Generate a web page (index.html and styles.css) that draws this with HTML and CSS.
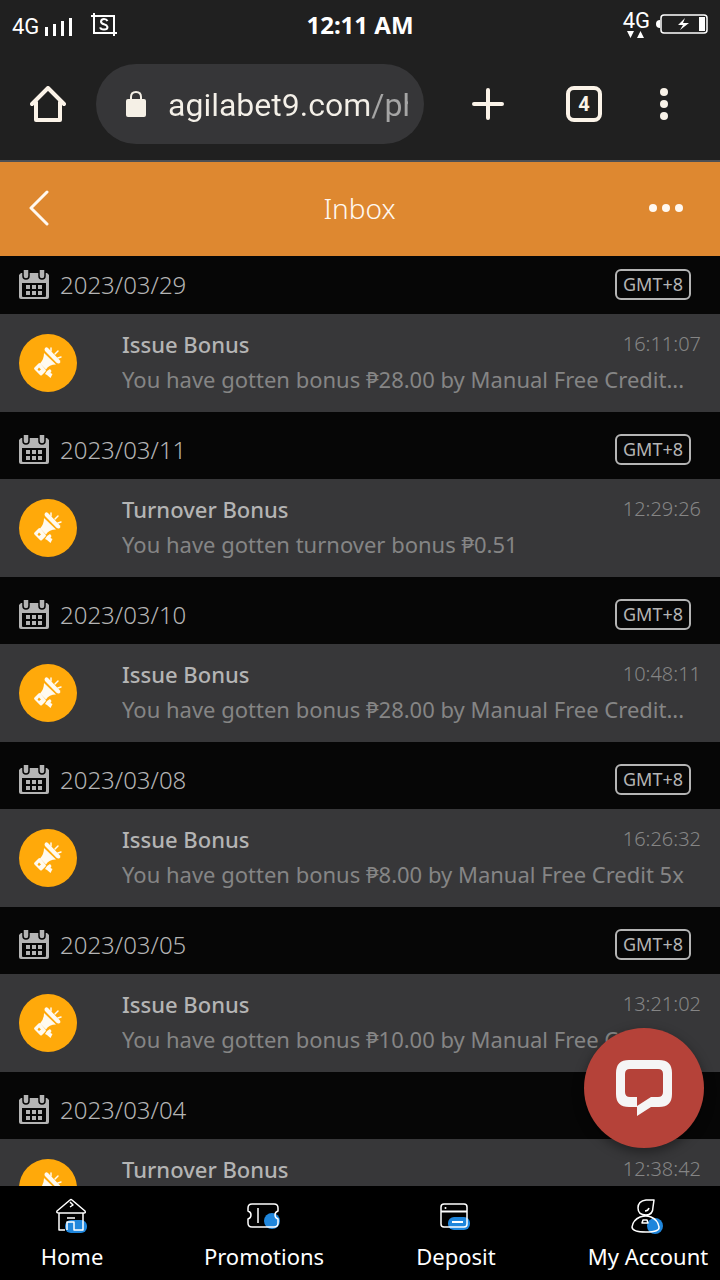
FILE: index.html
```
<!DOCTYPE html>
<html lang="en">
<head>
  <meta charset="UTF-8" />
  <meta name="viewport" content="width=device-width, initial-scale=1.0" />
  <title>Inbox</title>
  <link rel="stylesheet" href="styles.css">
</head>
<body>
  <!-- shared icons -->
  <svg width="0" height="0" class="sprite">
    <symbol id="calendar" viewBox="0 0 30 29">
      <path fill="currentColor" fill-rule="evenodd" d="M2 3h26l2 2v22q0 2-2 2H2q-2 0-2-2V5zM3 13v13q0 1 1 1h22q1 0 1-1V13z"/>
      <path d="M4 -1v7q0 3 3 3t3-3V-1M20 -1v7q0 3 3 3t3-3V-1" fill="currentColor" stroke="#060606" stroke-width="1.500"/>
      <path fill="currentColor" d="M7 15h4v4H7zM13 15h4v4h-4zM19 15h4v4h-4zM7 21h4v4H7zM13 21h4v4h-4zM19 21h4v4h-4z"/>
    </symbol>
    <symbol id="megaphone" viewBox="0 0 58 58">
      <g fill="#fffaf0">
        <path d="M26 14q1.500-1.500 3 0l12 12.500q1 2-.5 2.800t-3-.5L26 17q-1-1.500 0-3z"/>
        <path d="M25 19l12 11.500q-7 0-10 5l-6-6q4-4 4-10.500z"/>
        <path fill-rule="evenodd" d="M19.500 29.500q1-1 2 0l5 6q1 1 0 2l-3.500 3.500q-1 1-2 0l-5.500-5.500q-1-1 0-2zM20 33.500l-1.500 2 1.500 1.500 2-1.500z"/>
        <path d="M28 37l3-2 1.500 2-1 2 2 1-2 4-3.500-3-2-1z"/>
      </g>
      <path d="M32 17v-3M36 20l3-3M39 24l3-1" stroke="#fffaf0" stroke-width="1.500" stroke-linecap="round"/>
    </symbol>
  </svg>

  <header class="status-bar">
    <div class="status-left">
      <span class="network">4G</span>
      <svg width="28" height="18" viewBox="0 0 28 18" fill="#fff"><path d="M0 9h3v9H0zM8 6h3v12H8zM16 3h3v15h-3zM24 0h3v18h-3z"/></svg>
      <svg class="capture" width="26" height="24" viewBox="0 0 26 24" fill="none" stroke="#fff" stroke-width="2"><path d="M3 0v20h23M0 3h23v20"/><path d="M16.500 8q-1-2-3.500-2t-3 2.500q0 2 3 2.800t3.500 2.700q0 2.500-3.500 2.500t-3.800-2.200" stroke-width="2"/></svg>
    </div>
    <time class="clock">12:11 AM</time>
    <div class="status-right">
      <div class="data">
        <span class="network">4G</span>
        <svg width="18" height="7" viewBox="0 0 18 7" fill="#fff"><path d="M0 0h7L3.500 7zM10 7h7L13.500 0z"/></svg>
      </div>
      <svg width="52" height="20" viewBox="0 0 52 20"><path d="M4 6v8q-4 0-4-4t4-4z" fill="#fff"/><rect x="5" y="1" width="46" height="18" rx="3" fill="none" stroke="#fff" stroke-width="1.500"/><path d="M43 3h6v14h-6zM29 4l-7 7h5l-3 5 9-7h-6z" fill="#fff"/></svg>
    </div>
  </header>

  <div class="toolbar">
    <button class="tool small" aria-label="Home page">
      <svg width="36" height="36" viewBox="0 0 36 36" fill="none" stroke="#fbf3e8" stroke-width="4" stroke-linejoin="round" stroke-linecap="round"><path d="M2 18L18 2l16 16M6 16v18h24V16"/></svg>
    </button>
    <div class="address">
      <svg width="20" height="26" viewBox="0 0 20 26"><rect y="8" width="20" height="18" rx="2" fill="#f5f0e6"/><path d="M5 9V6q0-5 5-5t5 5v3" fill="none" stroke="#f5f0e6" stroke-width="2"/></svg>
      <input type="text" class="url" value="agilabet9.com/ph" aria-label="Address">
    </div>
    <button class="tool" aria-label="New tab">
      <svg width="32" height="32" viewBox="0 0 32 32" stroke="#fbf3e8" stroke-width="4" stroke-linecap="round"><path d="M16 2v28M2 16h28"/></svg>
    </button>
    <button class="tool" aria-label="Open tabs"><span class="tab-count">4</span></button>
    <button class="tool small" aria-label="Browser menu">
      <svg width="8" height="32" viewBox="0 0 8 32" fill="#f8f2e8"><circle cx="4" cy="4" r="4"/><circle cx="4" cy="16" r="4"/><circle cx="4" cy="28" r="4"/></svg>
    </button>
  </div>

  <div class="page-header">
    <button class="icon-btn" aria-label="Back">
      <svg width="20" height="36" viewBox="0 0 20 36" fill="none" stroke="#fff8f0" stroke-width="3" stroke-linecap="round" stroke-linejoin="round"><path d="M18 2L2 18l16 16"/></svg>
    </button>
    <h1>Inbox</h1>
    <button class="icon-btn" aria-label="More">
      <svg width="34" height="8" viewBox="0 0 34 8" fill="#fff8f0"><circle cx="4" cy="4" r="4"/><circle cx="17" cy="4" r="4"/><circle cx="30" cy="4" r="4"/></svg>
    </button>
  </div>

  <main class="inbox">
    <section class="day">
      <div class="day-header">
        <svg class="calendar"><use href="#calendar"/></svg>
        <h2>2023/03/29</h2>
        <span class="zone">GMT+8</span>
      </div>
      <article class="message">
        <svg class="badge"><use href="#megaphone"/></svg>
        <div class="content">
          <div class="top"><h3>Issue Bonus</h3><time>16:11:07</time></div>
          <p>You have gotten bonus ₱28.00 by Manual Free Credit...</p>
        </div>
      </article>
    </section>

    <section class="day">
      <div class="day-header">
        <svg class="calendar"><use href="#calendar"/></svg>
        <h2>2023/03/11</h2>
        <span class="zone">GMT+8</span>
      </div>
      <article class="message">
        <svg class="badge"><use href="#megaphone"/></svg>
        <div class="content">
          <div class="top"><h3>Turnover Bonus</h3><time>12:29:26</time></div>
          <p>You have gotten turnover bonus ₱0.51</p>
        </div>
      </article>
    </section>

    <section class="day">
      <div class="day-header">
        <svg class="calendar"><use href="#calendar"/></svg>
        <h2>2023/03/10</h2>
        <span class="zone">GMT+8</span>
      </div>
      <article class="message">
        <svg class="badge"><use href="#megaphone"/></svg>
        <div class="content">
          <div class="top"><h3>Issue Bonus</h3><time>10:48:11</time></div>
          <p>You have gotten bonus ₱28.00 by Manual Free Credit...</p>
        </div>
      </article>
    </section>

    <section class="day">
      <div class="day-header">
        <svg class="calendar"><use href="#calendar"/></svg>
        <h2>2023/03/08</h2>
        <span class="zone">GMT+8</span>
      </div>
      <article class="message">
        <svg class="badge"><use href="#megaphone"/></svg>
        <div class="content">
          <div class="top"><h3>Issue Bonus</h3><time>16:26:32</time></div>
          <p>You have gotten bonus ₱8.00 by Manual Free Credit 5x</p>
        </div>
      </article>
    </section>

    <section class="day">
      <div class="day-header">
        <svg class="calendar"><use href="#calendar"/></svg>
        <h2>2023/03/05</h2>
        <span class="zone">GMT+8</span>
      </div>
      <article class="message">
        <svg class="badge"><use href="#megaphone"/></svg>
        <div class="content">
          <div class="top"><h3>Issue Bonus</h3><time>13:21:02</time></div>
          <p>You have gotten bonus ₱10.00 by Manual Free Credit...</p>
        </div>
      </article>
    </section>

    <section class="day">
      <div class="day-header">
        <svg class="calendar"><use href="#calendar"/></svg>
        <h2>2023/03/04</h2>
      </div>
      <article class="message">
        <svg class="badge"><use href="#megaphone"/></svg>
        <div class="content">
          <div class="top"><h3>Turnover Bonus</h3><time>12:38:42</time></div>
        </div>
      </article>
    </section>
  </main>

  <nav class="bottom-nav">
    <a href="#home">
      <svg width="34" height="36" viewBox="0 0 34 36" fill="none" stroke="#fff" stroke-width="1.500" stroke-linejoin="round">
        <rect x="10" y="22" width="22" height="13" rx="6" fill="#1f86dc" stroke="none"/>
        <path d="M2 13L15 2q1-1 2 0l13 11q1 2-1 2H4q-3 0-2-2zM4 15v17h6M28 15v17h-8M12 32v-8h7v8h1M12 20h8M15 4l3 3-3 2"/>
      </svg>
      <span>Home</span>
    </a>
    <a href="#promotions">
      <svg width="34" height="36" viewBox="0 0 34 36" fill="none" stroke="#fff" stroke-width="1.500" stroke-linejoin="round">
        <circle cx="25" cy="23" r="8" fill="#1f86dc" stroke="none"/>
        <path d="M5 6h22q4 0 4 4v3q-3 1-3 4t3 4v4q0 4-4 4H5q-4 0-4-4v-4q3-1 3-4t-3-4v-3q0-4 4-4zM11 10v15"/>
      </svg>
      <span>Promotions</span>
    </a>
    <a href="#deposit">
      <svg width="34" height="36" viewBox="0 0 34 36" fill="none" stroke="#fff" stroke-width="1.500">
        <rect x="9" y="19" width="22" height="13" rx="6" fill="#1f86dc" stroke="none"/>
        <rect x="2" y="6" width="26" height="23" rx="3"/><path d="M2 13.500h26M13 24h11" stroke-width="2"/><circle cx="6.500" cy="10" r="1" fill="#fff" stroke="none"/>
      </svg>
      <span>Deposit</span>
    </a>
    <a href="#account">
      <svg width="34" height="36" viewBox="0 0 34 36" fill="none" stroke="#fff" stroke-width="1.500" stroke-linejoin="round">
        <circle cx="24" cy="28" r="8" fill="#1f86dc" stroke="none"/>
        <path d="M23 2h-8q-8 1-8 8t8 7q7 0 7-8zM18 10q-1 3-4 3M9 19q-7 3-8 10 0 5 14 5t13-5q-1-7-8-10-5-2-11 0zM11 25l1-3h4l1 3z"/>
      </svg>
      <span>My Account</span>
    </a>
  </nav>

  <button class="chat" aria-label="Open chat">
    <svg width="56" height="56" viewBox="0 0 56 56"><path fill="#f5f5f5" fill-rule="evenodd" d="M13 0h30q13 0 13 13v21q0 13-13 13h-8l-14 9v-9h-8Q0 47 0 34V13Q0 0 13 0zM14 9q-5 0-5 5v18q0 5 5 5h7v9l14-9h7q5 0 5-5V14q0-5-5-5z"/></svg>
  </button>
</body>
</html>
```

FILE: styles.css
```
* {
  box-sizing: border-box;
}
body {
  display: flex;
  flex-direction: column;
  height: 100vh;
  margin: 0;
  overflow: hidden;
  background-color: #060606;
  color: #b4b4b4;
  font-family: "Noto Sans", sans-serif;
}
h1, h2, h3, p {
  margin: 0;
  font-weight: normal;
}
button {
  display: flex;
  align-items: center;
  justify-content: center;
  padding: 0;
  border: 0;
  background: none;
}
.sprite {
  position: absolute;
}

/* phone status bar */
.status-bar {
  display: grid;
  grid-template-columns: 1fr auto 1fr;
  align-items: center;
  flex: none;
  height: 48px;
  padding: 0 12px;
  background: #202020;
  color: #fff;
}
.status-left, .status-right {
  display: flex;
  align-items: center;
  gap: 6px;
}
.status-right {
  justify-content: flex-end;
}
.network {
  font-family: Roboto, sans-serif;
  font-size: 22px;
  line-height: 20px;
}
.status-left {
  padding-top: 5px;
}
.capture {
  margin: 0 0 4px 12px;
}
.data {
  display: flex;
  flex-direction: column;
  align-items: center;
}
.clock {
  font-size: 24px;
  font-weight: bold;
}

/* browser toolbar */
.toolbar {
  display: flex;
  align-items: center;
  flex: none;
  height: 114px;
  padding: 0 24px 0 16px;
  background: #202020;
  border-bottom: 2px solid #4c4f54;
}
.tool {
  width: 96px;
  height: 80px;
}
.tool.small {
  width: 64px;
}
.address {
  display: flex;
  align-items: center;
  gap: 22px;
  flex: 1;
  min-width: 0;
  height: 80px;
  margin: 0 16px;
  padding: 0 16px 0 30px;
  border-radius: 40px;
  background: #363638;
}
.address svg {
  flex: none;
}
.url {
  flex: 1;
  min-width: 0;
  padding: 2px 0 0;
  border: 0;
  outline: 0;
  background: linear-gradient(to right, #f4f0e8 200px, #a5a5a5 204px);
  -webkit-background-clip: text;
  background-clip: text;
  color: transparent;
  font-family: Roboto, sans-serif;
  font-size: 32px;
}
.tab-count {
  width: 36px;
  height: 36px;
  border: 4px solid #fbf3e8;
  border-radius: 8px;
  color: #fbf3e8;
  font: bold 20px/28px Roboto, sans-serif;
}

/* orange page header */
.page-header {
  display: flex;
  align-items: center;
  justify-content: space-between;
  flex: none;
  height: 94px;
  padding: 0 37px 2px 22px;
  background: #de8830;
}
.page-header h1 {
  flex: 1;
  padding-left: 14px;
  color: #fff8f0;
  font-size: 28px;
  font-weight: 300;
  text-align: center;
}
.icon-btn {
  min-width: 34px;
  height: 48px;
}

/* messages grouped by day */
.inbox {
  flex: 1;
  min-height: 0;
  overflow: hidden;
}
.day + .day {
  padding-top: 9px;
}
.day-header {
  display: flex;
  align-items: center;
  height: 58px;
  padding: 0 29px 1px 19px;
}
.calendar {
  width: 30px;
  height: 29px;
  margin-right: 11px;
}
.day-header h2 {
  font-size: 24px;
  font-weight: 300;
}
.zone {
  margin-left: auto;
  padding: 0 6px;
  border: 2px solid #b4b4b4;
  border-radius: 6px;
  font-size: 18px;
  line-height: 27px;
}
.message {
  display: flex;
  align-items: center;
  height: 98px;
  padding: 0 19px;
  background: #373739;
}
.badge {
  flex: none;
  width: 58px;
  height: 58px;
  margin-right: 45px;
  border-radius: 50%;
  background: #ffa90a;
}
.content {
  flex: 1;
  min-width: 0;
  height: 72px;
}
.top {
  display: flex;
  align-items: center;
  justify-content: space-between;
}
.top h3 {
  font-size: 22px;
  font-weight: 500;
  line-height: 34px;
}
.top time {
  color: #858585;
  font-size: 20px;
  font-weight: 300;
  line-height: 34px;
}
.content p {
  overflow: hidden;
  color: #858585;
  font-size: 22px;
  line-height: 36px;
  white-space: nowrap;
  text-overflow: ellipsis;
}

.bottom-nav {
  display: flex;
  justify-content: space-between;
  flex: none;
  height: 94px;
  background: #000;
}
.bottom-nav a {
  display: flex;
  flex-direction: column;
  align-items: center;
  width: 20%;
  padding-top: 12px;
  color: #fff;
  font-size: 22px;
  line-height: 44px;
  text-decoration: none;
  white-space: nowrap;
}
.bottom-nav svg {
  flex: none;
}

.chat {
  position: fixed;
  right: 16px;
  bottom: 132px;
  width: 120px;
  height: 120px;
  border-radius: 50%;
  background: #b54239;
  box-shadow: 0 4px 12px rgba(0, 0, 0, 0.4);
}
```
